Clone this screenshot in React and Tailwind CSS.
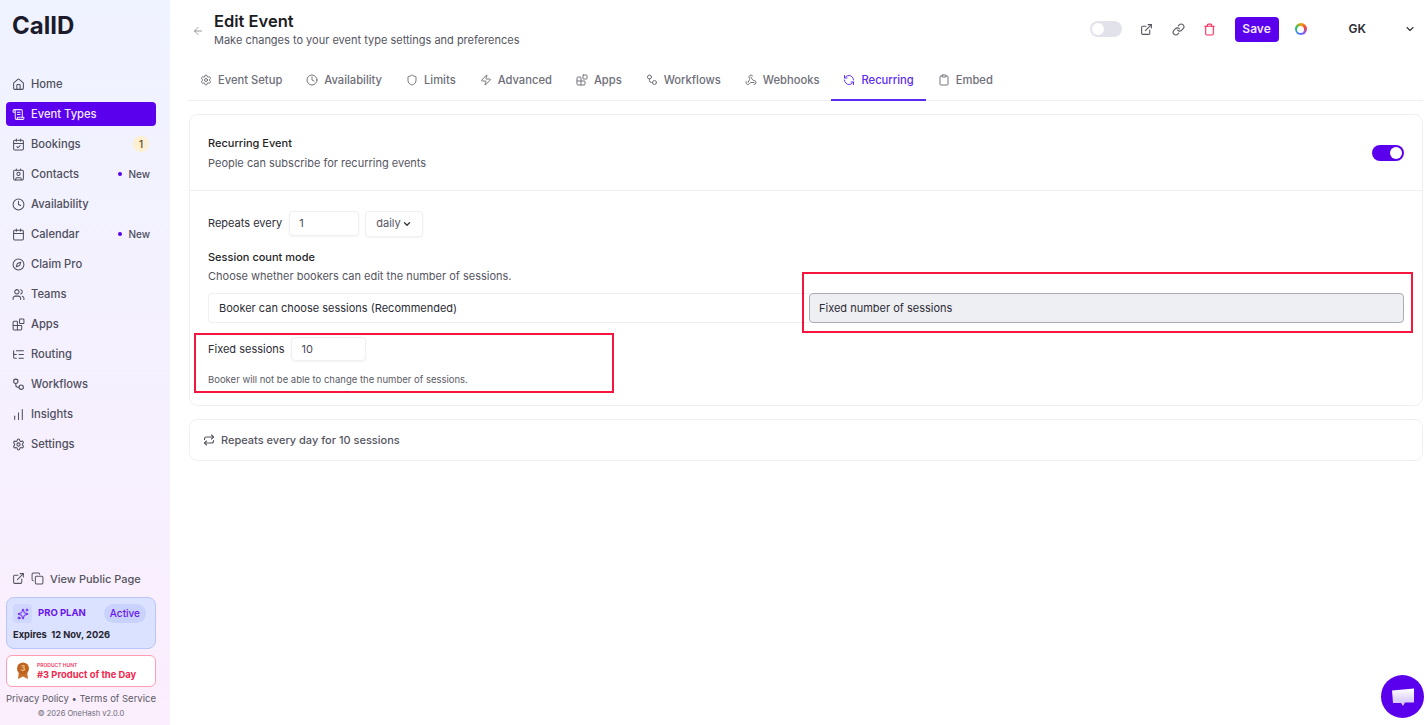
import {
  House, ScrollText, CalendarCheck, Contact, Clock, Calendar, Compass, Users, Blocks, ListTree,
  ChartNoAxesColumnIncreasing, Settings, ExternalLink, Copy, Sparkles, ArrowLeft, Link, Trash, ChevronDown,
  Shield, Zap, Webhook, RefreshCcw, Clipboard, Repeat,
} from 'lucide-react';

function WorkflowIcon({ className }) {
  return (
    <svg className={className} viewBox="0 0 24 24" fill="none" stroke="currentColor" strokeWidth="2" strokeLinecap="round" strokeLinejoin="round">
      <circle cx="7" cy="6" r="4" />
      <circle cx="17" cy="17" r="4" />
      <path d="M7 10v3a4 4 0 0 0 4 4h2" />
    </svg>
  );
}

function Medal() {
  return (
    <svg className="w-[16px] h-[18px] shrink-0" viewBox="0 0 16 18">
      <path d="M4 9 3 17 8 14.5 13 17 12 9Z" fill="#c9702c" />
      <circle cx="8" cy="6.5" r="6" fill="#bd6420" />
      <text x="8" y="9" textAnchor="middle" fontSize="7" fontWeight="700" fill="#f0c48a">3</text>
    </svg>
  );
}

const navItems = [
  { label: 'Home', icon: House },
  { label: 'Event Types', icon: ScrollText, active: true },
  { label: 'Bookings', icon: CalendarCheck, count: '1' },
  { label: 'Contacts', icon: Contact, isNew: true },
  { label: 'Availability', icon: Clock },
  { label: 'Calendar', icon: Calendar, isNew: true },
  { label: 'Claim Pro', icon: Compass },
  { label: 'Teams', icon: Users },
  { label: 'Apps', icon: Blocks },
  { label: 'Routing', icon: ListTree },
  { label: 'Workflows', icon: WorkflowIcon },
  { label: 'Insights', icon: ChartNoAxesColumnIncreasing },
  { label: 'Settings', icon: Settings },
];

const tabs = [
  { label: 'Event Setup', icon: Settings },
  { label: 'Availability', icon: Clock },
  { label: 'Limits', icon: Shield },
  { label: 'Advanced', icon: Zap },
  { label: 'Apps', icon: Blocks },
  { label: 'Workflows', icon: WorkflowIcon },
  { label: 'Webhooks', icon: Webhook },
  { label: 'Recurring', icon: RefreshCcw, active: true },
  { label: 'Embed', icon: Clipboard },
];

function Sidebar() {
  return (
    <aside className="w-[170px] shrink-0 h-screen flex flex-col bg-gradient-to-b from-[#eff3ff] to-[#fbeefd] pl-[6px] pr-[14px]">
      <div className="h-[72px] pl-[6px] pt-[12px] text-[24px] leading-[28px] font-bold text-[#1b1b2b]">CalID</div>
      <nav className="flex flex-col">
        {navItems.map((item) => (
          <div
            key={item.label}
            className={`h-[24px] mb-[6px] rounded-[4px] pl-[6px] pr-[6px] flex items-center gap-[6px] text-[11.2px] font-medium ${item.active ? 'bg-[#5b00ec] text-[#f1e9ff]' : 'text-[#4e4e5c]'}`}
          >
            <item.icon className="w-[13px] h-[13px]" strokeWidth={1.9} />
            <span>{item.label}</span>
            {item.count && (
              <span className="ml-auto mr-[1px] w-[16px] h-[16px] rounded-full bg-[#fdf0d2] text-[#5c4a1e] text-[10px] flex items-center justify-center">{item.count}</span>
            )}
            {item.isNew && (
              <span className="ml-auto flex items-center gap-[6px] text-[10px] text-[#4e4e5c]">
                <span className="w-[4px] h-[4px] rounded-full bg-[#5b00ec]" />
                New
              </span>
            )}
          </div>
        ))}
      </nav>
      <div className="mt-auto flex flex-col">
        <div className="flex items-center pl-[6px] text-[#55555f] text-[11px] font-medium mb-[10px]">
          <ExternalLink className="w-[13px] h-[13px]" strokeWidth={1.9} />
          <Copy className="w-[13px] h-[13px] ml-[6px]" strokeWidth={1.9} />
          <span className="ml-[6px]">View Public Page</span>
        </div>
        <div className="h-[52px] rounded-[8px] border border-[#b9c6fb] bg-[#dbe2ff] px-[6px] pt-[6px]">
          <div className="flex items-center">
            <span className="w-[19px] h-[19px] rounded-[4px] bg-[#cfd7fd] flex items-center justify-center">
              <Sparkles className="w-[12px] h-[12px] text-[#5b00ec]" strokeWidth={1.75} />
            </span>
            <span className="ml-[6px] text-[9.5px] font-bold text-[#6a12ee]">PRO PLAN</span>
            <span className="ml-auto mr-[3px] h-[19px] px-[6px] rounded-full bg-[#c9d2fc] text-[10px] font-medium text-[#6a12ee] flex items-center">Active</span>
          </div>
          <div className="mt-[5px] text-[9.3px] font-bold text-[#24242e]">Expires&nbsp; 12 Nov, 2026</div>
        </div>
        <div className="h-[32px] mt-[6px] rounded-[6px] border border-[#ff9db4] bg-white pl-[8px] flex items-center gap-[6px]">
          <Medal />
          <div className="flex flex-col">
            <span className="text-[5px] leading-[7px] font-semibold text-[#f0375f]">PRODUCT HUNT</span>
            <span className="text-[9.4px] leading-[12px] font-bold text-[#f0294f]">#3 Product of the Day</span>
          </div>
        </div>
        <div className="mt-[5px] text-[9.5px] leading-[14px] text-[#5b5b66] flex justify-between whitespace-nowrap">
          <span>Privacy Policy</span>
          <span>•</span>
          <span>Terms of Service</span>
        </div>
        <div className="mt-[2px] mb-[5px] text-center text-[7.5px] leading-[12px] text-[#6b6b76]">© 2026 OneHash v2.0.0</div>
      </div>
    </aside>
  );
}

function Header() {
  return (
    <div className="h-[58px] flex items-center">
      <ArrowLeft className="w-[12px] h-[12px] text-[#8b8b94] ml-[3px] mt-[4px]" strokeWidth={1.75} />
      <div className="ml-[10px] mt-[2px]">
        <div className="text-[16.5px] leading-[20px] font-semibold text-[#1c1c24] -mt-px">Edit Event</div>
        <div className="text-[11px] leading-[16px] text-[#55555f] mt-[1px]">Make changes to your event type settings and preferences</div>
      </div>
      <div className="ml-auto flex items-center">
        <span className="w-[32px] h-[16px] rounded-full bg-[#e2e3ea] p-[2px] flex">
          <span className="w-[12px] h-[12px] rounded-full bg-white" />
        </span>
        <ExternalLink className="w-[13px] h-[13px] ml-[18px] text-[#55555f]" strokeWidth={2} />
        <Link className="w-[13px] h-[13px] ml-[19px] text-[#55555f]" strokeWidth={2} />
        <Trash className="w-[13px] h-[13px] ml-[18px] text-[#fb2c5a]" strokeWidth={2} />
        <span className="ml-[19px] w-[44px] h-[25px] rounded-[4px] bg-[#5b00ec] text-[#efe6ff] text-[12px] font-semibold flex items-center justify-center">Save</span>
        <span className="ml-[16px] w-[12px] h-[12px] rounded-full bg-[conic-gradient(#f59e0b,#ef4444,#8b5cf6,#3b82f6,#22c55e,#f59e0b)] flex items-center justify-center">
          <span className="w-[7px] h-[7px] rounded-full bg-white" />
        </span>
        <span className="ml-[42px] text-[12px] font-semibold text-[#2a2a33]">GK</span>
        <ChevronDown className="ml-[38px] mr-[7px] w-[12px] h-[12px] text-[#33333c]" strokeWidth={2.25} />
      </div>
    </div>
  );
}

function Tabs() {
  return (
    <div className="h-[43px] flex border-b border-[#eeeef6] -ml-px">
      {tabs.map((tab) => (
        <div
          key={tab.label}
          className={`h-[43px] pt-[3px] px-[12px] flex items-center gap-[6px] text-[11.2px] font-medium border-b-2 ${tab.active ? 'border-[#5b2cf0] text-[#5b2cf0]' : 'border-transparent text-[#6e6e78]'}`}
        >
          <tab.icon className="w-[12px] h-[12px]" strokeWidth={1.9} />
          <span>{tab.label}</span>
        </div>
      ))}
    </div>
  );
}

function Main() {
  return (
    <main className="flex-1 min-w-0 pl-[19px] pr-[4px]">
      <Header />
      <Tabs />
      <section className="mt-[13px] h-[292px] rounded-[8px] border border-[#f0f0f4] bg-white">
        <div className="h-[76px] border-b border-[#f0f0f4] pl-[18px] pr-[18px] flex items-center justify-between">
          <div>
            <div className="text-[11px] leading-[18px] font-medium text-[#1f1f27]">Recurring Event</div>
            <div className="mt-[2px] text-[11px] leading-[18px] text-[#55555f]">People can subscribe for recurring events</div>
          </div>
          <span className="w-[32px] h-[16px] rounded-full bg-[#5b00ec] p-[2px] flex justify-end">
            <span className="w-[12px] h-[12px] rounded-full bg-white" />
          </span>
        </div>
        <div className="pl-[18px] pr-[18px] pt-[20px]">
          <div className="flex items-center h-[25px] text-[11px] text-[#2c2c35]">
            <span>Repeats every</span>
            <span className="ml-[7px] w-[70px] h-[25px] rounded-[4px] border border-[#f0f0f4] shadow-xs pl-[9px] flex items-center text-[#4a4a55]">1</span>
            <span className="ml-[6px] w-[58px] h-[26px] rounded-[4px] border border-[#f0f0f4] shadow-xs pl-[10px] flex items-center gap-[1px] text-[#55555f]">
              daily
              <ChevronDown className="w-[10px] h-[10px] text-[#33333c]" strokeWidth={3} />
            </span>
          </div>
          <div className="mt-[13px] text-[11px] leading-[16px] font-medium text-[#1f1f27]">Session count mode</div>
          <div className="mt-[3px] text-[11px] leading-[16px] text-[#55555f]">Choose whether bookers can edit the number of sessions.</div>
          <div className="mt-[9px] flex h-[30px]">
            <div className="w-[601px] shrink-0 rounded-l-[4px] border border-r-0 border-[#f0f0f4] pl-[10px] flex items-center text-[11px] text-[#2c2c35]">Booker can choose sessions (Recommended)</div>
            <div className="flex-1 rounded-[4px] border border-[#a9abb6] bg-[#eeeff3] pl-[9px] flex items-center text-[11px] text-[#2c2c35]">Fixed number of sessions</div>
          </div>
          <div className="mt-[14px] flex items-center h-[24px] text-[11px] text-[#2c2c35]">
            <span>Fixed sessions</span>
            <span className="ml-[6px] w-[75px] h-[24px] rounded-[4px] border border-[#f0f0f4] shadow-xs pl-[10px] flex items-center text-[#4a4a55]">10</span>
          </div>
          <div className="mt-[13px] text-[9.5px] leading-[12px] text-[#5b5b66]">Booker will not be able to change the number of sessions.</div>
        </div>
      </section>
      <section className="mt-[13px] h-[42px] rounded-[8px] border border-[#f0f0f4] bg-white pl-[13px] flex items-center gap-[6px] text-[11px] font-medium text-[#55555f]">
        <Repeat className="w-[12px] h-[12px]" strokeWidth={2.25} />
        <span>Repeats every day for 10 sessions</span>
      </section>
    </main>
  );
}

export default function App() {
  return (
    <div className="relative h-screen flex overflow-hidden bg-white font-['Inter',sans-serif]">
      <Sidebar />
      <Main />
      {/* annotation boxes drawn over the screenshot */}
      <div className="absolute left-[194px] top-[333px] w-[420px] h-[60px] border-2 border-[#f5163f]" />
      <div className="absolute left-[802px] top-[272px] w-[611px] h-[61px] border-2 border-[#f5163f]" />
      <button className="absolute left-[1381px] top-[675px] w-[43px] h-[43px] rounded-full bg-[#5b00ec] flex items-center justify-center">
        <svg className="w-[24px] h-[24px]" viewBox="0 0 24 24">
          <defs>
            <linearGradient id="chat" x1="0" y1="0" x2="0" y2="1">
              <stop offset="0" stopColor="#ffffff" />
              <stop offset="1" stopColor="#cdbdf5" />
            </linearGradient>
          </defs>
          <path d="M1 5.5 23 3.5V17.5H14L12 21 10 18H2Z" fill="url(#chat)" />
        </svg>
      </button>
    </div>
  );
}
